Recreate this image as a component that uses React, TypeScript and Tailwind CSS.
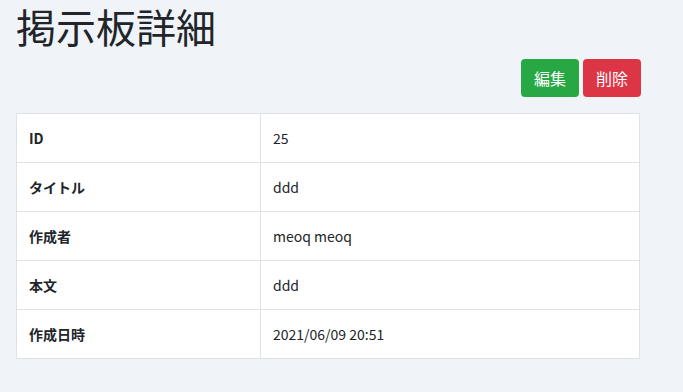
export default function App() {
  const rows = [
    { label: 'ID', value: '25' },
    { label: 'タイトル', value: 'ddd' },
    { label: '作成者', value: 'meoq meoq' },
    { label: '本文', value: 'ddd' },
    { label: '作成日時', value: '2021/06/09 20:51' },
  ];

  return (
    <div
      className="min-h-screen bg-[#f0f4f8] text-[#212529]"
      style={{ fontFamily: '"Noto Sans CJK JP", "Noto Sans", sans-serif' }}
    >
      <div className="w-[641px] pl-4 pt-[1px]">
        <h1 className="text-[40px] leading-[50px] font-normal">掲示板詳細</h1>
        <div className="mt-2 flex justify-end gap-1">
          <button className="h-[38px] w-[58px] rounded-[4px] bg-[#28a745] text-base text-white">
            編集
          </button>
          <button className="h-[38px] w-[58px] rounded-[4px] bg-[#dc3545] text-base text-white">
            削除
          </button>
        </div>
        <table className="mt-4 w-[624px] border-collapse bg-white text-sm">
          <tbody>
            {rows.map(r => (
              <tr key={r.label} className="h-[49px]">
                <th className="w-[244px] border border-[#dee2e6] px-3 text-left font-bold">
                  {r.label}
                </th>
                <td className="border border-[#dee2e6] px-3">{r.value}</td>
              </tr>
            ))}
          </tbody>
        </table>
      </div>
    </div>
  );
}
